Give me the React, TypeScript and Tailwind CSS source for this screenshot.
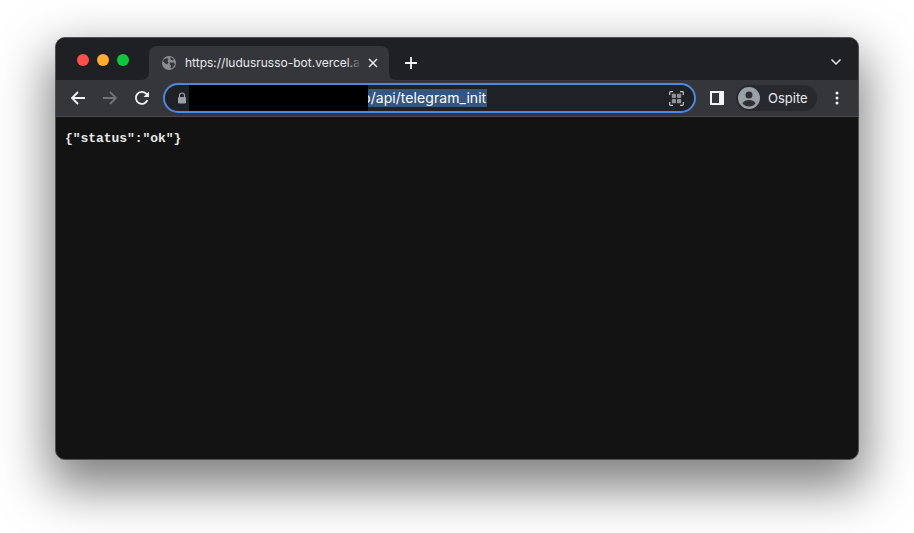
import React from 'react';

const Globe = () => (
  <svg width="14" height="14" viewBox="0 0 14 14" className="shrink-0">
    <circle cx="7" cy="7" r="7" fill="#8a8d91" />
    <path d="M1.500 3.500 L5 2 L6.500 3.500 L5.500 5 L6.500 6.500 L5 8.500 L3.500 7.500 L1 5.500Z" fill="#35363a" />
    <path d="M8.500 1 L12 3 L10.500 4.500 L8.500 3.500Z M8 6.500 L12 6.500 L13 8.500 L10 12.500 L8.500 12 L9 9.500 L7.500 8Z" fill="#35363a" />
  </svg>
);

const TabFoot = ({ flip }: { flip?: boolean }) => (
  <svg width="8" height="8" viewBox="0 0 8 8" className={flip ? 'absolute right-[-8px] bottom-0' : 'absolute left-[-8px] bottom-0'}>
    <path d={flip ? 'M0 0 Q0 8 8 8 L0 8Z' : 'M8 0 Q8 8 0 8 L8 8Z'} fill="#35363a" />
  </svg>
);

const Arrow = ({ dir, color }: { dir: 'left' | 'right'; color: string }) => (
  <svg width="16" height="16" viewBox="0 0 16 16" fill="none" stroke={color} strokeWidth="1.800">
    {dir === 'left' ? <path d="M15 8H2 M8 2L2 8l6 6" /> : <path d="M1 8h13 M8 2l6 6-6 6" />}
  </svg>
);

const Reload = () => (
  <svg width="16" height="16" viewBox="0 0 16 16" fill="none">
    <path d="M13.400 10.200A6 6 0 1 1 12.200 3.700L14 5.500" stroke="#f1f3f4" strokeWidth="1.800" />
    <path d="M15 1.500V7H9.500Z" fill="#f1f3f4" />
  </svg>
);

const QrIcon = () => (
  <svg width="15" height="15" viewBox="0 0 15 15" fill="none">
    <path d="M.7 4V1.500A.8.8 0 0 1 1.500.7H4 M11 .7h2.500a.8.8 0 0 1 .8.8V4 M14.300 11v2.500a.8.8 0 0 1-.8.8H11 M4 14.300H1.500a.8.8 0 0 1-.8-.8V11" stroke="#c4c6c9" strokeWidth="1.200" />
    <rect x="2.800" y="2.800" width="4.200" height="4.200" rx=".8" fill="#8f9295" />
    <rect x="8" y="2.800" width="4.200" height="4.200" rx=".8" fill="#8f9295" />
    <rect x="2.800" y="8" width="4.200" height="4.200" rx=".8" fill="#8f9295" />
    <rect x="8" y="8" width="4.200" height="4.200" rx=".8" fill="#8f9295" />
  </svg>
);

const Avatar = () => (
  <svg width="22" height="22" viewBox="0 0 22 22" className="shrink-0">
    <circle cx="11" cy="11" r="11" fill="#9aa0a6" />
    <circle cx="11" cy="8" r="3.500" fill="#2f3033" />
    <path d="M4.500 16.500C5.500 13.800 8.500 13 11 13s5.500.8 6.500 3.500C16 18.400 13.700 19.500 11 19.500S6 18.400 4.500 16.500Z" fill="#2f3033" />
  </svg>
);

export default function App() {
  return (
    <div className="w-[914px] h-[533px] bg-white overflow-hidden pl-[55px] pt-[37px] font-['Inter',sans-serif]">
      <div className="w-[804px] h-[423px] flex flex-col rounded-[10px] overflow-hidden border border-[#4f5054] bg-[#131313] shadow-[0_22px_50px_6px_rgba(0,0,0,0.5)]">
        {/* title bar */}
        <div className="h-[42px] shrink-0 bg-[#1f2023] flex items-end pl-[21px]">
          <div className="flex gap-[8px] self-start mt-[16px]">
            <div className="w-3 h-3 rounded-full bg-[#fe4f4a]" />
            <div className="w-3 h-3 rounded-full bg-[#fcae2c]" />
            <div className="w-3 h-3 rounded-full bg-[#0fc73c]" />
          </div>
          <div className="relative ml-[20px] w-[240px] h-[34px] bg-[#35363a] rounded-t-[8px] flex items-center pl-[13px] pr-[11px]">
            <TabFoot />
            <TabFoot flip />
            <Globe />
            <div className="relative ml-[9px] w-[176px] h-4 overflow-hidden text-[12px] text-[#e8eaed] leading-[16px]">
              <span className="whitespace-nowrap">https://ludusrusso-bot.vercel.a</span>
              <div className="absolute right-0 top-0 h-full w-[14px] bg-gradient-to-r from-transparent to-[#35363a]" />
            </div>
            <svg width="10" height="10" viewBox="0 0 10 10" className="ml-auto" stroke="#e8eaed" strokeWidth="1.500">
              <path d="M1 1l8 8M9 1l-8 8" />
            </svg>
          </div>
          <svg width="14" height="14" viewBox="0 0 14 14" className="ml-[15px] mb-[10px]" stroke="#f1f3f4" strokeWidth="1.800">
            <path d="M7 1v12M1 7h12" />
          </svg>
          <svg width="12" height="8" viewBox="0 0 12 8" fill="none" className="ml-auto mr-[16px] mb-[14px]" stroke="#e8eaed" strokeWidth="1.500">
            <path d="M1.500 1.500L6 6l4.500-4.500" />
          </svg>
        </div>
        {/* toolbar */}
        <div className="h-[36px] shrink-0 bg-[#35363a] border-b border-[#4a4b4f] box-content flex items-center pl-[14px] pr-[16px]">
          <Arrow dir="left" color="#f1f3f4" />
          <div className="ml-[16px]"><Arrow dir="right" color="#6f7276" /></div>
          <div className="ml-[16px]"><Reload /></div>
          <div className="relative ml-[13px] w-[533px] h-[30px] rounded-full border-2 border-[#4f86df] bg-[#202124] flex items-center pl-[12px] pr-[10px]">
            <svg width="10" height="12" viewBox="0 0 10 12" className="shrink-0">
              <path d="M2.500 5V3.500a2.500 2.500 0 0 1 5 0V5" fill="none" stroke="#9aa0a6" strokeWidth="1.200" />
              <rect x="1" y="5" width="8" height="6.500" rx="1" fill="#9aa0a6" />
            </svg>
            <div className="ml-[174px] h-[18px] w-[126px] bg-[#35567f] text-white text-[14px] leading-[18px] tracking-[0.06px] whitespace-nowrap overflow-hidden pl-[1px]">
              p/api/telegram_init
            </div>
            <div className="ml-auto"><QrIcon /></div>
            {/* redaction */}
            <div className="absolute left-[24px] top-0 bottom-0 w-[179px] bg-black" />
          </div>
          <svg width="14" height="14" viewBox="0 0 14 14" className="ml-[14px] shrink-0">
            <path d="M0 0h14v14H0Z M2 2v10h7V2Z" fill="#f1f3f4" fillRule="evenodd" />
          </svg>
          <div className="ml-[12px] w-[81px] h-[26px] rounded-full bg-[#28292c] flex items-center pl-[2px]">
            <Avatar />
            <span className="ml-[8px] pt-[1px] text-[13px] text-[#e8eaed]">Ospite</span>
          </div>
          <svg width="4" height="14" viewBox="0 0 4 14" className="ml-[18px] shrink-0" fill="#f1f3f4">
            <circle cx="2" cy="2" r="1.500" />
            <circle cx="2" cy="7" r="1.500" />
            <circle cx="2" cy="12" r="1.500" />
          </svg>
        </div>
        {/* page */}
        <div className="flex-1 pl-[9px] pt-[14px]">
          <pre className="font-['Liberation_Mono',monospace] font-bold text-[13px] leading-[16px] tracking-[-0.05px] text-[#e8e8e8]">{'{"status":"ok"}'}</pre>
        </div>
      </div>
    </div>
  );
}
